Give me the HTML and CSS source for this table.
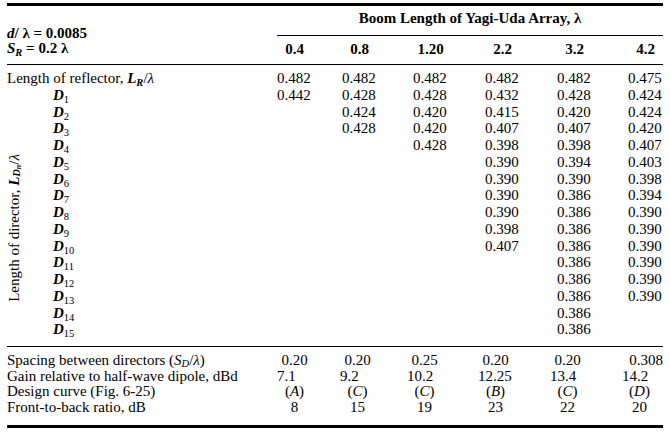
FILE: index.html
```html
<!DOCTYPE html>
<html>
<head>
<meta charset="utf-8">
<link rel="stylesheet" href="styles.css">
</head>
<body>
<div class="table">
  <div class="head">
    <div class="params">
      <div><i>d</i>/ λ = 0.0085</div>
      <div><i>S<sub>R</sub></i> = 0.2 λ</div>
    </div>
    <div class="boom">Boom Length of Yagi-Uda Array, λ</div>
    <div class="colh"><span>0.4</span></div>
    <div class="colh"><span>0.8</span></div>
    <div class="colh"><span>1.20</span></div>
    <div class="colh"><span>2.2</span></div>
    <div class="colh"><span>3.2</span></div>
    <div class="colh last"><span>4.2</span></div>
  </div>

  <div class="body">
    <div class="vlabel">Length of director, <i class="bi">L</i><sub><i class="bi">D<sub>n</sub></i></sub>/<i>λ</i></div>

    <div class="rlabel">Length of reflector, <i class="bi">L<sub>R</sub></i>/<i>λ</i></div>
    <div>0.482</div><div>0.482</div><div>0.482</div><div>0.482</div><div>0.482</div><div>0.475</div>

    <div class="dl"><i class="bi">D</i><sub>1</sub></div>
    <div>0.442</div><div>0.428</div><div>0.428</div><div>0.432</div><div>0.428</div><div>0.424</div>

    <div class="dl"><i class="bi">D</i><sub>2</sub></div>
    <div></div><div>0.424</div><div>0.420</div><div>0.415</div><div>0.420</div><div>0.424</div>

    <div class="dl"><i class="bi">D</i><sub>3</sub></div>
    <div></div><div>0.428</div><div>0.420</div><div>0.407</div><div>0.407</div><div>0.420</div>

    <div class="dl"><i class="bi">D</i><sub>4</sub></div>
    <div></div><div></div><div>0.428</div><div>0.398</div><div>0.398</div><div>0.407</div>

    <div class="dl"><i class="bi">D</i><sub>5</sub></div>
    <div></div><div></div><div></div><div>0.390</div><div>0.394</div><div>0.403</div>

    <div class="dl"><i class="bi">D</i><sub>6</sub></div>
    <div></div><div></div><div></div><div>0.390</div><div>0.390</div><div>0.398</div>

    <div class="dl"><i class="bi">D</i><sub>7</sub></div>
    <div></div><div></div><div></div><div>0.390</div><div>0.386</div><div>0.394</div>

    <div class="dl"><i class="bi">D</i><sub>8</sub></div>
    <div></div><div></div><div></div><div>0.390</div><div>0.386</div><div>0.390</div>

    <div class="dl"><i class="bi">D</i><sub>9</sub></div>
    <div></div><div></div><div></div><div>0.398</div><div>0.386</div><div>0.390</div>

    <div class="dl"><i class="bi">D</i><sub>10</sub></div>
    <div></div><div></div><div></div><div>0.407</div><div>0.386</div><div>0.390</div>

    <div class="dl"><i class="bi">D</i><sub>11</sub></div>
    <div></div><div></div><div></div><div></div><div>0.386</div><div>0.390</div>

    <div class="dl"><i class="bi">D</i><sub>12</sub></div>
    <div></div><div></div><div></div><div></div><div>0.386</div><div>0.390</div>

    <div class="dl"><i class="bi">D</i><sub>13</sub></div>
    <div></div><div></div><div></div><div></div><div>0.386</div><div>0.390</div>

    <div class="dl"><i class="bi">D</i><sub>14</sub></div>
    <div></div><div></div><div></div><div></div><div>0.386</div><div></div>

    <div class="dl"><i class="bi">D</i><sub>15</sub></div>
    <div></div><div></div><div></div><div></div><div>0.386</div><div></div>
  </div>

  <div class="foot">
    <div>Spacing between directors (<i>S<sub class="lo">D</sub></i>/<i>λ</i>)</div>
    <div class="c">0.20</div><div class="c">0.20</div><div class="c">0.25</div><div class="c">0.20</div><div class="c">0.20</div><div class="r">0.308</div>

    <div>Gain relative to half-wave dipole, dBd</div>
    <div>7.1</div><div>9.2</div><div>10.2</div><div>12.25</div><div>13.4</div><div>14.2</div>

    <div>Design curve (Fig. 6-25)</div>
    <div class="c">(<i>A</i>)</div><div class="c">(<i>C</i>)</div><div class="c">(<i>C</i>)</div><div class="c">(<i>B</i>)</div><div class="c">(<i>C</i>)</div><div class="c">(<i>D</i>)</div>

    <div>Front-to-back ratio, dB</div>
    <div class="c">8</div><div class="c">15</div><div class="c">19</div><div class="c">23</div><div class="c">22</div><div class="c">20</div>
  </div>
</div>
</body>
</html>
```

FILE: styles.css
```css
html, body {
  margin: 0;
  padding: 0;
  background: #fff;
}

body {
  padding: 3px 7px 0 7px;
  font-family: "Liberation Serif", "Times New Roman", serif;
  font-size: 15px;
  color: #000;
}

.table {
  width: 656px;
  border-top: 3px solid #000;
  border-bottom: 3px solid #000;
}

sub {
  font-size: 0.7em;
  vertical-align: -0.3em;
  line-height: 0;
}

sub sub {
  font-size: 0.75em;
  vertical-align: -0.25em;
}

.bi {
  font-weight: bold;
}

/* ---------- header ---------- */
.head {
  display: grid;
  grid-template-columns: 270px 65px 71px 72px 72px 71px 35px;
  border-bottom: 1px solid #000;
  font-weight: bold;
}

.params {
  grid-column: 1;
  grid-row: 1 / 3;
  align-self: end;
  line-height: 15px;
  padding-bottom: 8px;
}

.boom {
  grid-column: 2 / 8;
  grid-row: 1;
  text-align: center;
  line-height: 17px;
  padding: 4px 0 8px;
  border-bottom: 1px solid #000;
}

.colh {
  grid-row: 2;
  line-height: 17px;
  padding: 5px 0 6px;
}

.colh span {
  display: block;
  width: 35px;
  text-align: center;
}

/* ---------- body ---------- */
.body {
  display: grid;
  grid-template-columns: 46px 224px 65px 71px 72px 72px 71px 35px;
  grid-auto-rows: 16.75px;
  line-height: 16.75px;
  padding: 5px 0 8px;
  border-bottom: 1px solid #000;
}

.vlabel {
  grid-column: 1;
  grid-row: 2 / 17;
  writing-mode: vertical-rl;
  transform: rotate(180deg);
  align-self: end;
  justify-self: start;
  line-height: 16px;
  margin: 0 0 36px -1px;
  white-space: nowrap;
}

.rlabel {
  grid-column: 1 / 3;
}

.dl {
  grid-column: 2;
}

/* ---------- footer ---------- */
.foot {
  display: grid;
  grid-template-columns: 270px 63px 67px 71px 72px 72px 41px;
  grid-auto-rows: 15.7px;
  line-height: 15.7px;
  padding: 6px 0 9px;
}

.foot sub.lo {
  vertical-align: -0.2em;
}

.foot .c {
  width: 35px;
  text-align: center;
}

.foot .r {
  text-align: right;
}
```
